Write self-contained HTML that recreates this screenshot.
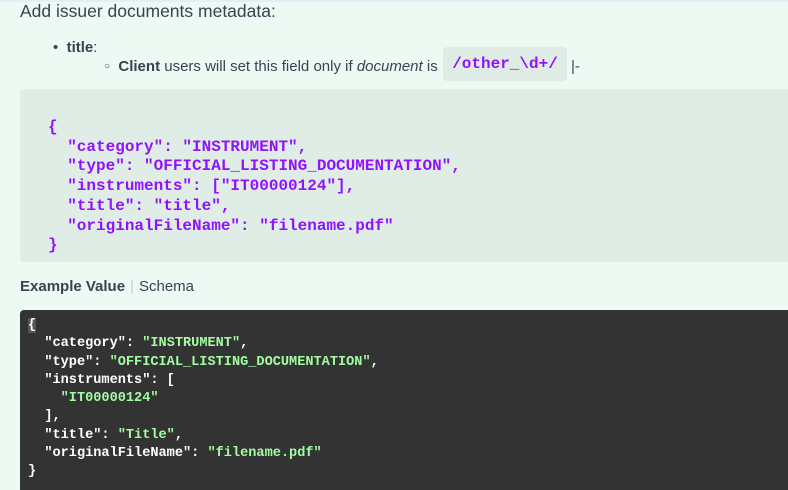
<!DOCTYPE html>
<html><head><meta charset="utf-8"><style>
html,body{margin:0;padding:0}
body{width:788px;height:483px;overflow:hidden;background:#edf9f3;font-family:"Liberation Sans",sans-serif;color:#3b4151;position:relative}
.a{position:absolute;white-space:pre}
.mono{font-family:"Liberation Mono",monospace}
</style></head><body>
<div class="a" style="left:0;top:0;width:788px;height:2px;background:#e3eef6"></div>
<div class="a" style="left:20px;top:0px;font-size:17.5px;line-height:22px">Add issuer documents metadata:</div>
<div class="a" style="left:53px;top:39px;font-size:15px;line-height:18px">•&nbsp;&nbsp;<b>title</b>:</div>
<div class="a" style="left:104px;top:58px;font-size:15px;line-height:18px"><span style="font-size:10px;position:relative;top:-2px">○</span>&nbsp;&nbsp;<b>Client</b> users will set this field only if <i>document</i> is</div>
<div class="a mono" style="left:443px;top:47px;width:124px;height:34px;background:#dfebe5;border-radius:4px;color:#9012fe;font-weight:bold;font-size:16px;line-height:34px;text-align:center">/other_\d+/</div>
<div class="a" style="left:571px;top:58px;font-size:15px;line-height:18px">|-</div>
<div class="a" style="left:20px;top:89px;width:768px;height:173px;background:#e0ece6;border-radius:4px 0 0 4px"></div>
<div class="a mono" style="left:48px;top:118px;font-size:16px;line-height:19.7px;color:#9012fe;font-weight:bold">{
  "category": "INSTRUMENT",
  "type": "OFFICIAL_LISTING_DOCUMENTATION",
  "instruments": ["IT00000124"],
  "title": "title",
  "originalFileName": "filename.pdf"
}</div>
<div class="a" style="left:20px;top:278px;font-size:15px;line-height:18px"><b>Example Value</b><span style="color:#ccc;margin:0 5px">|</span>Schema</div>
<div class="a" style="left:20px;top:310px;width:768px;height:180px;background:#333;border-radius:4px 0 0 0"></div>
<div class="a mono" style="left:28px;top:317px;font-size:13.6px;line-height:18.3px;color:#fff;font-weight:bold"><span style="background:#555">{</span>
  "category": <span style="color:#a2fca2">"INSTRUMENT"</span>,
  "type": <span style="color:#a2fca2">"OFFICIAL_LISTING_DOCUMENTATION"</span>,
  "instruments": [
    <span style="color:#a2fca2">"IT00000124"</span>
  ],
  "title": <span style="color:#a2fca2">"Title"</span>,
  "originalFileName": <span style="color:#a2fca2">"filename.pdf"</span>
}</div>
</body></html>
